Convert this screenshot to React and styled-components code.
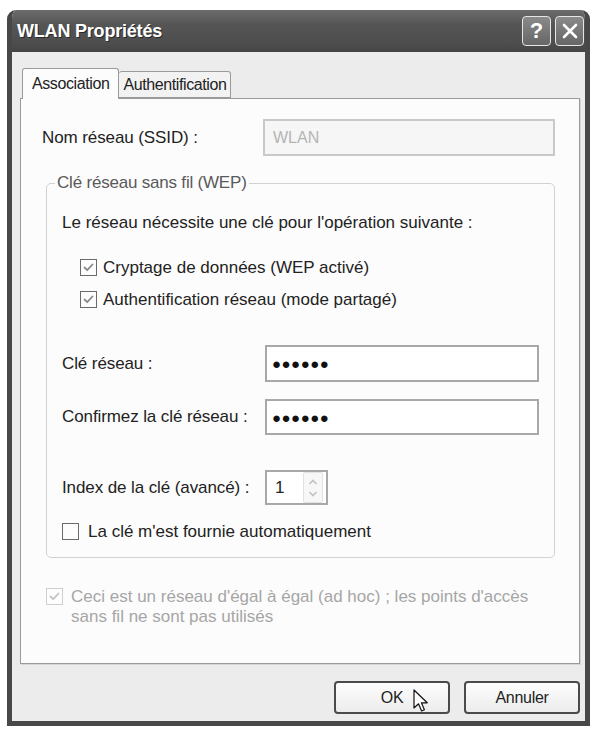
import React from 'react'
import styled, { createGlobalStyle } from 'styled-components'

const GlobalStyle = createGlobalStyle`
  html, body {
    margin: 0;
    padding: 0;
    background: #ffffff;
  }
  body {
    font-family: "Liberation Sans", Arial, sans-serif;
    color: #222;
  }
`

function CheckMark({ color }) {
  return (
    <svg width="13" height="13" viewBox="0 0 13 13">
      <path d="M2.5 6.5 L5.2 9.2 L10.5 3.5" fill="none" stroke={color} strokeWidth="1.8" strokeLinecap="round" strokeLinejoin="round" />
    </svg>
  )
}

function Checkbox({ checked, disabled, gap, children }) {
  return (
    <CheckRow $disabled={disabled} $gap={gap}>
      <Box $disabled={disabled}>
        {checked && <CheckMark color={disabled ? '#c4c4c4' : '#8a8a8a'} />}
      </Box>
      <span>{children}</span>
    </CheckRow>
  )
}

export default function App() {
  return (
    <Page>
      <GlobalStyle />
      <Window>
        <TitleBar>
          <Title>WLAN Propriétés</Title>
          <Controls>
            <CtrlButton>?</CtrlButton>
            <CtrlButton>
              <svg width="18" height="18" viewBox="0 0 18 18">
                <path d="M3 3 L15 15 M15 3 L3 15" stroke="#fff" strokeWidth="2.6" strokeLinecap="round" />
              </svg>
            </CtrlButton>
          </Controls>
        </TitleBar>

        <Body>
          <Tabs>
            <Tab $active>Association</Tab>
            <Tab>Authentification</Tab>
          </Tabs>

          <Panel>
            <FieldRow>
              <Label $w={221}>Nom réseau (SSID) :</Label>
              <TextField $w={293} $h={37} $disabled>WLAN</TextField>
            </FieldRow>

            <GroupBox>
              <Legend>Clé réseau sans fil (WEP)</Legend>
              <Line>Le réseau nécessite une clé pour l'opération suivante :</Line>
              <Indent $top={25}>
                <Checkbox checked>Cryptage de données (WEP activé)</Checkbox>
              </Indent>
              <Indent $top={12}>
                <Checkbox checked>Authentification réseau (mode partagé)</Checkbox>
              </Indent>

              <FieldRow $top={35}>
                <Label $w={203}>Clé réseau :</Label>
                <TextField $w={275} $h={37}><Dots>●●●●●●</Dots></TextField>
              </FieldRow>
              <FieldRow $top={17}>
                <Label $w={203}>Confirmez la clé réseau :</Label>
                <TextField $w={275} $h={36}><Dots>●●●●●●</Dots></TextField>
              </FieldRow>

              <FieldRow $top={35}>
                <Label $w={203}>Index de la clé (avancé) :</Label>
                <Spin>
                  <SpinValue>1</SpinValue>
                  <SpinArrows>
                    <svg width="14" height="28" viewBox="0 0 14 28">
                      <path d="M3.5 10 L7 6.5 L10.5 10" fill="none" stroke="#c2c2c2" strokeWidth="1.6" />
                      <path d="M3.5 18 L7 21.5 L10.5 18" fill="none" stroke="#c2c2c2" strokeWidth="1.6" />
                    </svg>
                  </SpinArrows>
                </Spin>
              </FieldRow>

              <Plain $top={17}>
                <Checkbox gap={9}>La clé m'est fournie automatiquement</Checkbox>
              </Plain>
            </GroupBox>

            <AdHoc>
              <Checkbox checked disabled gap={8}>
                Ceci est un réseau d'égal à égal (ad hoc) ; les points d'accès<br />
                sans fil ne sont pas utilisés
              </Checkbox>
            </AdHoc>
          </Panel>

          <Footer>
            <Button>
              OK
              <Cursor>
                <svg width="16" height="26" viewBox="0 0 16 26">
                  <path d="M1 1 L1 19 L5.5 14.8 L8.6 22 L11.4 20.8 L8.4 13.8 L14.2 13.8 Z" fill="#fff" stroke="#111" strokeWidth="1.2" strokeLinejoin="round" />
                </svg>
              </Cursor>
            </Button>
            <Button>Annuler</Button>
          </Footer>
        </Body>
      </Window>
    </Page>
  )
}

const Page = styled.div`
  padding: 10px 5px 0 7px;
`

const Window = styled.div`
  width: 583px;
  height: 716px;
  box-sizing: border-box;
  background: #ececec;
  border: 5px solid #484848;
  border-top: none;
  border-radius: 9px 9px 0 0;
  display: flex;
  flex-direction: column;
  overflow: hidden;
`

const TitleBar = styled.div`
  height: 42px;
  margin: 0 -5px;
  padding: 0 6px 0 10px;
  display: flex;
  align-items: center;
  justify-content: space-between;
  background: linear-gradient(#6c6c6c, #555 35%, #4d4d4d 80%, #444);
  border-radius: 9px 9px 0 0;
`

const Title = styled.div`
  color: #fff;
  font-weight: bold;
  font-size: 18px;
  letter-spacing: -0.2px;
  text-shadow: 1px 1px 0 #2a2a2a;
`

const Controls = styled.div`
  display: flex;
  gap: 4px;
`

const CtrlButton = styled.div`
  width: 29px;
  height: 30px;
  box-sizing: border-box;
  border: 1.5px solid #e6e6e6;
  border-radius: 4px;
  background: linear-gradient(#8a8a8a, #666);
  color: #fff;
  font-size: 22px;
  font-weight: bold;
  display: flex;
  align-items: center;
  justify-content: center;
`

const Body = styled.div`
  flex: 1;
  padding: 15px 5px 0 8px;
  display: flex;
  flex-direction: column;
`

const Tabs = styled.div`
  display: flex;
  align-items: flex-end;
  height: 31px;
  padding-left: 2px;
  position: relative;
  z-index: 1;
`

const Tab = styled.div`
  height: ${p => (p.$active ? 31 : 27)}px;
  box-sizing: border-box;
  padding: 0 ${p => (p.$active ? 9 : 4)}px;
  margin-bottom: ${p => (p.$active ? -1 : 0)}px;
  display: flex;
  align-items: center;
  font-size: 16px;
  letter-spacing: -0.4px;
  color: #222;
  background: ${p => (p.$active ? '#fcfcfc' : '#f2f2f2')};
  border: 1px solid #9a9a9a;
  border-bottom: ${p => (p.$active ? 'none' : '1px solid #9a9a9a')};
  border-left: ${p => (p.$active ? '1px solid #9a9a9a' : 'none')};
  border-radius: 3px 3px 0 0;
`

const Panel = styled.div`
  height: 566px;
  box-sizing: border-box;
  background: #fcfcfc;
  border: 1px solid #9a9a9a;
  padding: 20px 24px 0 21px;
  box-shadow: 1px 1px 0 #d6d6d6;
`

const FieldRow = styled.div`
  display: flex;
  align-items: center;
  margin-top: ${p => p.$top || 0}px;
`

const Label = styled.div`
  width: ${p => p.$w}px;
  flex-shrink: 0;
  font-size: 17px;
  letter-spacing: -0.1px;
`

const TextField = styled.div`
  width: ${p => p.$w}px;
  height: ${p => p.$h}px;
  box-sizing: border-box;
  border: 2px solid ${p => (p.$disabled ? '#c9c9c9' : '#a8a8a8')};
  background: ${p => (p.$disabled ? '#f6f6f6' : '#fff')};
  color: #b4b4b4;
  font-size: 16px;
  padding-left: ${p => (p.$disabled ? 8 : 5)}px;
  display: flex;
  align-items: center;
`

const Dots = styled.span`
  color: #111;
  font-size: 15px;
  letter-spacing: 0.5px;
`

const GroupBox = styled.fieldset`
  margin: 18px 0 0 4px;
  padding: 21px 15px 15px 15px;
  border: 1px solid #d2d2d2;
  border-radius: 5px;
  min-width: 0;
`

const Legend = styled.legend`
  padding: 0 2px;
  margin-left: -7px;
  font-size: 17px;
  line-height: 18px;
  color: #5a5a5a;
  letter-spacing: -0.2px;
`

const Line = styled.div`
  font-size: 17px;
  line-height: 20px;
  letter-spacing: 0;
`

const Indent = styled.div`
  margin: ${p => p.$top}px 0 0 18px;
`

const Plain = styled.div`
  margin-top: ${p => p.$top}px;
`

const CheckRow = styled.div`
  display: flex;
  align-items: flex-start;
  gap: ${p => p.$gap || 6}px;
  font-size: 17px;
  line-height: 20px;
  letter-spacing: 0;
  color: ${p => (p.$disabled ? '#a6a6a6' : '#222')};
`

const Box = styled.div`
  width: 17px;
  height: 17px;
  margin-top: 1px;
  box-sizing: border-box;
  flex-shrink: 0;
  border: 1.5px solid ${p => (p.$disabled ? '#cfcfcf' : '#6a6a6a')};
  background: #fdfdfd;
  display: flex;
  align-items: center;
  justify-content: center;
`

const Spin = styled.div`
  width: 63px;
  height: 35px;
  box-sizing: border-box;
  border: 2px solid #a8a8a8;
  background: #fff;
  display: flex;
  align-items: center;
  justify-content: space-between;
  padding: 0 3px 0 8px;
`

const SpinValue = styled.span`
  font-size: 17px;
`

const SpinArrows = styled.div`
  width: 18px;
  height: 29px;
  border: 1px solid #e2e2e2;
  border-radius: 2px;
  background: #f7f7f7;
  display: flex;
  align-items: center;
  justify-content: center;
`

const AdHoc = styled.div`
  margin: 29px 0 0 4px;
`

const Footer = styled.div`
  display: flex;
  justify-content: flex-end;
  gap: 14px;
  padding: 17px 0 0 0;
`

const Button = styled.div`
  position: relative;
  width: 116px;
  height: 33px;
  box-sizing: border-box;
  border: 2px solid #4a4a4a;
  border-radius: 4px;
  background: linear-gradient(#fdfdfd, #ececec);
  display: flex;
  align-items: center;
  justify-content: center;
  font-size: 16px;
  letter-spacing: -0.3px;
  color: #222;
`

const Cursor = styled.div`
  position: absolute;
  left: 77px;
  top: 6px;
`
